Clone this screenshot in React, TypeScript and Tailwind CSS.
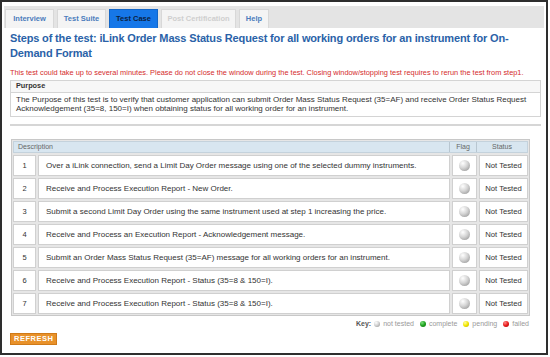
import React from "react"

const steps = [
  "Over a iLink connection, send a Limit Day Order message using one of the selected dummy instruments.",
  "Receive and Process Execution Report - New Order.",
  "Submit a second Limit Day Order using the same instrument used at step 1 increasing the price.",
  "Receive and Process an Execution Report - Acknowledgement message.",
  "Submit an Order Mass Status Request (35=AF) message for all working orders for an instrument.",
  "Receive and Process Execution Report - Status (35=8 & 150=I).",
  "Receive and Process Execution Report - Status (35=8 & 150=I).",
]

const Ball = ({ color = "gray", size = 10 }: { color?: string; size?: number }) => {
  const grad: Record<string, string> = {
    gray: "bg-[radial-gradient(circle_at_35%_30%,#ffffff_0%,#d4d4d4_45%,#8a8a8a_100%)]",
    green: "bg-[radial-gradient(circle_at_35%_30%,#7ee07e_0%,#1fa31f_50%,#0b6b0b_100%)]",
    yellow: "bg-[radial-gradient(circle_at_35%_30%,#ffffa0_0%,#f2e600_50%,#b8a800_100%)]",
    red: "bg-[radial-gradient(circle_at_35%_30%,#ff8a8a_0%,#e81c1c_50%,#a00000_100%)]",
  }
  return (
    <span
      className={`inline-block rounded-full ${grad[color]} ${size === 10 ? "w-[11px] h-[11px]" : "w-[6px] h-[6px]"}`}
    />
  )
}

const App = () => {
  return (
    <div className="w-[550px] h-[357px] bg-white overflow-hidden" style={{ fontFamily: '"Liberation Sans", Arial, sans-serif' }}>
      <div className="w-[548px] h-[355px] border-2 border-[#2e2e2e] bg-white flex flex-col">
        {/* tabs */}
        <div className="mx-[2px] mt-[4px] h-[22px] bg-[#e4e4e4] flex items-end gap-[3px] pl-[1px]">
          <div className="h-[19px] w-[49px] bg-[#f4f4f4] border border-[#d8d8d8] border-b-0 flex items-center justify-center text-[7.5px] font-bold text-[#4b7cbc]">Interview</div>
          <div className="h-[19px] w-[49px] bg-[#f4f4f4] border border-[#d8d8d8] border-b-0 flex items-center justify-center text-[7.5px] font-bold text-[#4b7cbc]">Test Suite</div>
          <div className="h-[19px] w-[49px] bg-[#1677e8] border border-[#1266c8] border-b-0 flex items-center justify-center text-[7.5px] font-bold text-[#0b2142]">Test Case</div>
          <div className="h-[19px] w-[75px] bg-[#f4f4f4] border border-[#d8d8d8] border-b-0 flex items-center justify-center text-[7.5px] font-bold text-[#cfcfcf]">Post Certification</div>
          <div className="h-[19px] w-[30px] bg-[#f4f4f4] border border-[#d8d8d8] border-b-0 flex items-center justify-center text-[7.5px] font-bold text-[#4b7cbc]">Help</div>
        </div>

        <div className="px-[8px]">
          <h1 className="mt-[3px] w-[520px] text-[11px] leading-[15px] font-bold text-[#2a62a8] tracking-[-0.15px]">
            Steps of the test: iLink Order Mass Status Request for all working orders for an instrument for On-Demand Format
          </h1>

          <p className="mt-[7px] text-[7.4px] leading-[9px] text-[#d42b2b]">
            This test could take up to several minutes. Please do not close the window during the test. Closing window/stopping test requires to rerun the test from step1.
          </p>

          <div className="mt-[3px] w-[531px] border border-[#d4d4d4]">
            <div className="h-[12px] px-[5px] flex items-center text-[7.3px] font-bold text-[#333] bg-[#f7f7f7] border-b border-[#d4d4d4]">Purpose</div>
            <div className="px-[5px] py-[3px] text-[8px] leading-[8.5px] text-[#333]">
              The Purpose of this test is to verify that customer application can submit Order Mass Status Request (35=AF) and receive Order Status Request Acknowledgement (35=8, 150=I) when obtaining status for all working order for an instrument.
            </div>
          </div>

          <div className="mt-[7px] w-[531px] h-[2px] bg-[#d6d6d6]" />

          <div className="mt-[13px] w-[519px] ml-[1px] border border-[#c8c8c8] bg-[#e6e6e6] p-[1px]">
            <div className="flex h-[12px] bg-[#d8e6f0] border border-[#c4d2dc] text-[7px] text-[#666]">
              <div className="flex-1 flex items-center pl-[4px]">Description</div>
              <div className="w-[27px] border-l border-[#b8c6d0] flex items-center justify-center">Flag</div>
              <div className="w-[51px] border-l border-[#b8c6d0] flex items-center justify-center">Status</div>
            </div>
            {steps.map((s, i) => (
              <div key={i} className="flex h-[23px] gap-[2px] pt-[2px]">
                <div className="w-[23px] bg-white border border-[#d0d0d0] flex items-center justify-center text-[7.5px] text-[#333]">{i + 1}</div>
                <div className="flex-1 bg-white border border-[#d0d0d0] flex items-center pl-[7px] text-[8px] text-[#333]">{s}</div>
                <div className="w-[25px] bg-white border border-[#d0d0d0] flex items-center justify-center"><Ball /></div>
                <div className="w-[49px] bg-white border border-[#d0d0d0] flex items-center justify-center text-[7.7px] text-[#333]">Not Tested</div>
              </div>
            ))}
          </div>

          <div className="mt-[3px] w-[519px] flex justify-end items-center gap-[3px] text-[7px] text-[#999]">
            <span className="font-bold text-[#555]">Key:</span>
            <Ball size={6} /><span className="mr-[3px]">not tested</span>
            <Ball color="green" size={6} /><span className="mr-[3px]">complete</span>
            <Ball color="yellow" size={6} /><span className="mr-[3px]">pending</span>
            <Ball color="red" size={6} /><span>failed</span>
          </div>

          <button className="mt-[3px] h-[12px] px-[3px] bg-[#e8912a] border border-[#d07a18] text-white text-[7.5px] font-bold tracking-[0.5px] flex items-center">
            REFRESH
          </button>
        </div>
      </div>
    </div>
  )
}

export default App
